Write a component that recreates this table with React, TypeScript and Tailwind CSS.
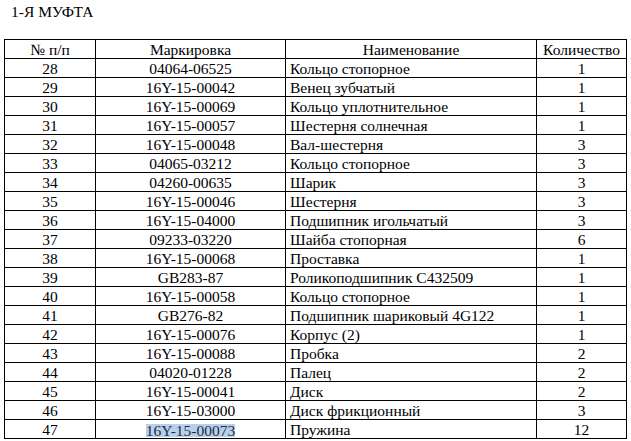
import React from "react";

const rows: [string, string, string, string][] = [
  ["28", "04064-06525", "Кольцо стопорное", "1"],
  ["29", "16Y-15-00042", "Венец зубчатый", "1"],
  ["30", "16Y-15-00069", "Кольцо уплотнительное", "1"],
  ["31", "16Y-15-00057", "Шестерня солнечная", "1"],
  ["32", "16Y-15-00048", "Вал-шестерня", "3"],
  ["33", "04065-03212", "Кольцо стопорное", "3"],
  ["34", "04260-00635", "Шарик", "3"],
  ["35", "16Y-15-00046", "Шестерня", "3"],
  ["36", "16Y-15-04000", "Подшипник игольчатый", "3"],
  ["37", "09233-03220", "Шайба стопорная", "6"],
  ["38", "16Y-15-00068", "Проставка", "1"],
  ["39", "GB283-87", "Роликоподшипник С432509", "1"],
  ["40", "16Y-15-00058", "Кольцо стопорное", "1"],
  ["41", "GB276-82", "Подшипник шариковый 4G122", "1"],
  ["42", "16Y-15-00076", "Корпус (2)", "1"],
  ["43", "16Y-15-00088", "Пробка", "2"],
  ["44", "04020-01228", "Палец", "2"],
  ["45", "16Y-15-00041", "Диск", "2"],
  ["46", "16Y-15-03000", "Диск фрикционный", "3"],
  ["47", "16Y-15-00073", "Пружина", "12"],
];

const cell = "bg-white leading-[20px] whitespace-nowrap";

export default function App() {
  return (
    <div className="w-[631px] h-[441px] bg-white text-black text-[15.5px] overflow-hidden font-['Liberation_Serif','Times_New_Roman',serif]">
      <div className="pt-[2px] pl-[11px] leading-[20px]">1-Я МУФТА</div>
      <div className="mt-[17px] ml-[4px] w-[623px] bg-black p-px grid grid-cols-[90px_189px_250px_89px] auto-rows-[18px] gap-px">
        <div className={`${cell} text-center`}>№ п/п</div>
        <div className={`${cell} text-center`}>Маркировка</div>
        <div className={`${cell} text-center`}>Наименование</div>
        <div className={`${cell} text-center`}>Количество</div>
        {rows.map(([n, m, name, q]) => (
          <React.Fragment key={n}>
            <div className={`${cell} text-center`}>{n}</div>
            <div className={`${cell} text-center`}>
              {n === "47" ? (
                <span className="inline-block bg-[#b8d0e8] text-[#1f2d4d] leading-[13px] align-[-1px]">
                  {m}
                </span>
              ) : (
                m
              )}
            </div>
            <div className={`${cell} pl-[4px]`}>{name}</div>
            <div className={`${cell} text-center`}>{q}</div>
          </React.Fragment>
        ))}
      </div>
    </div>
  );
}
